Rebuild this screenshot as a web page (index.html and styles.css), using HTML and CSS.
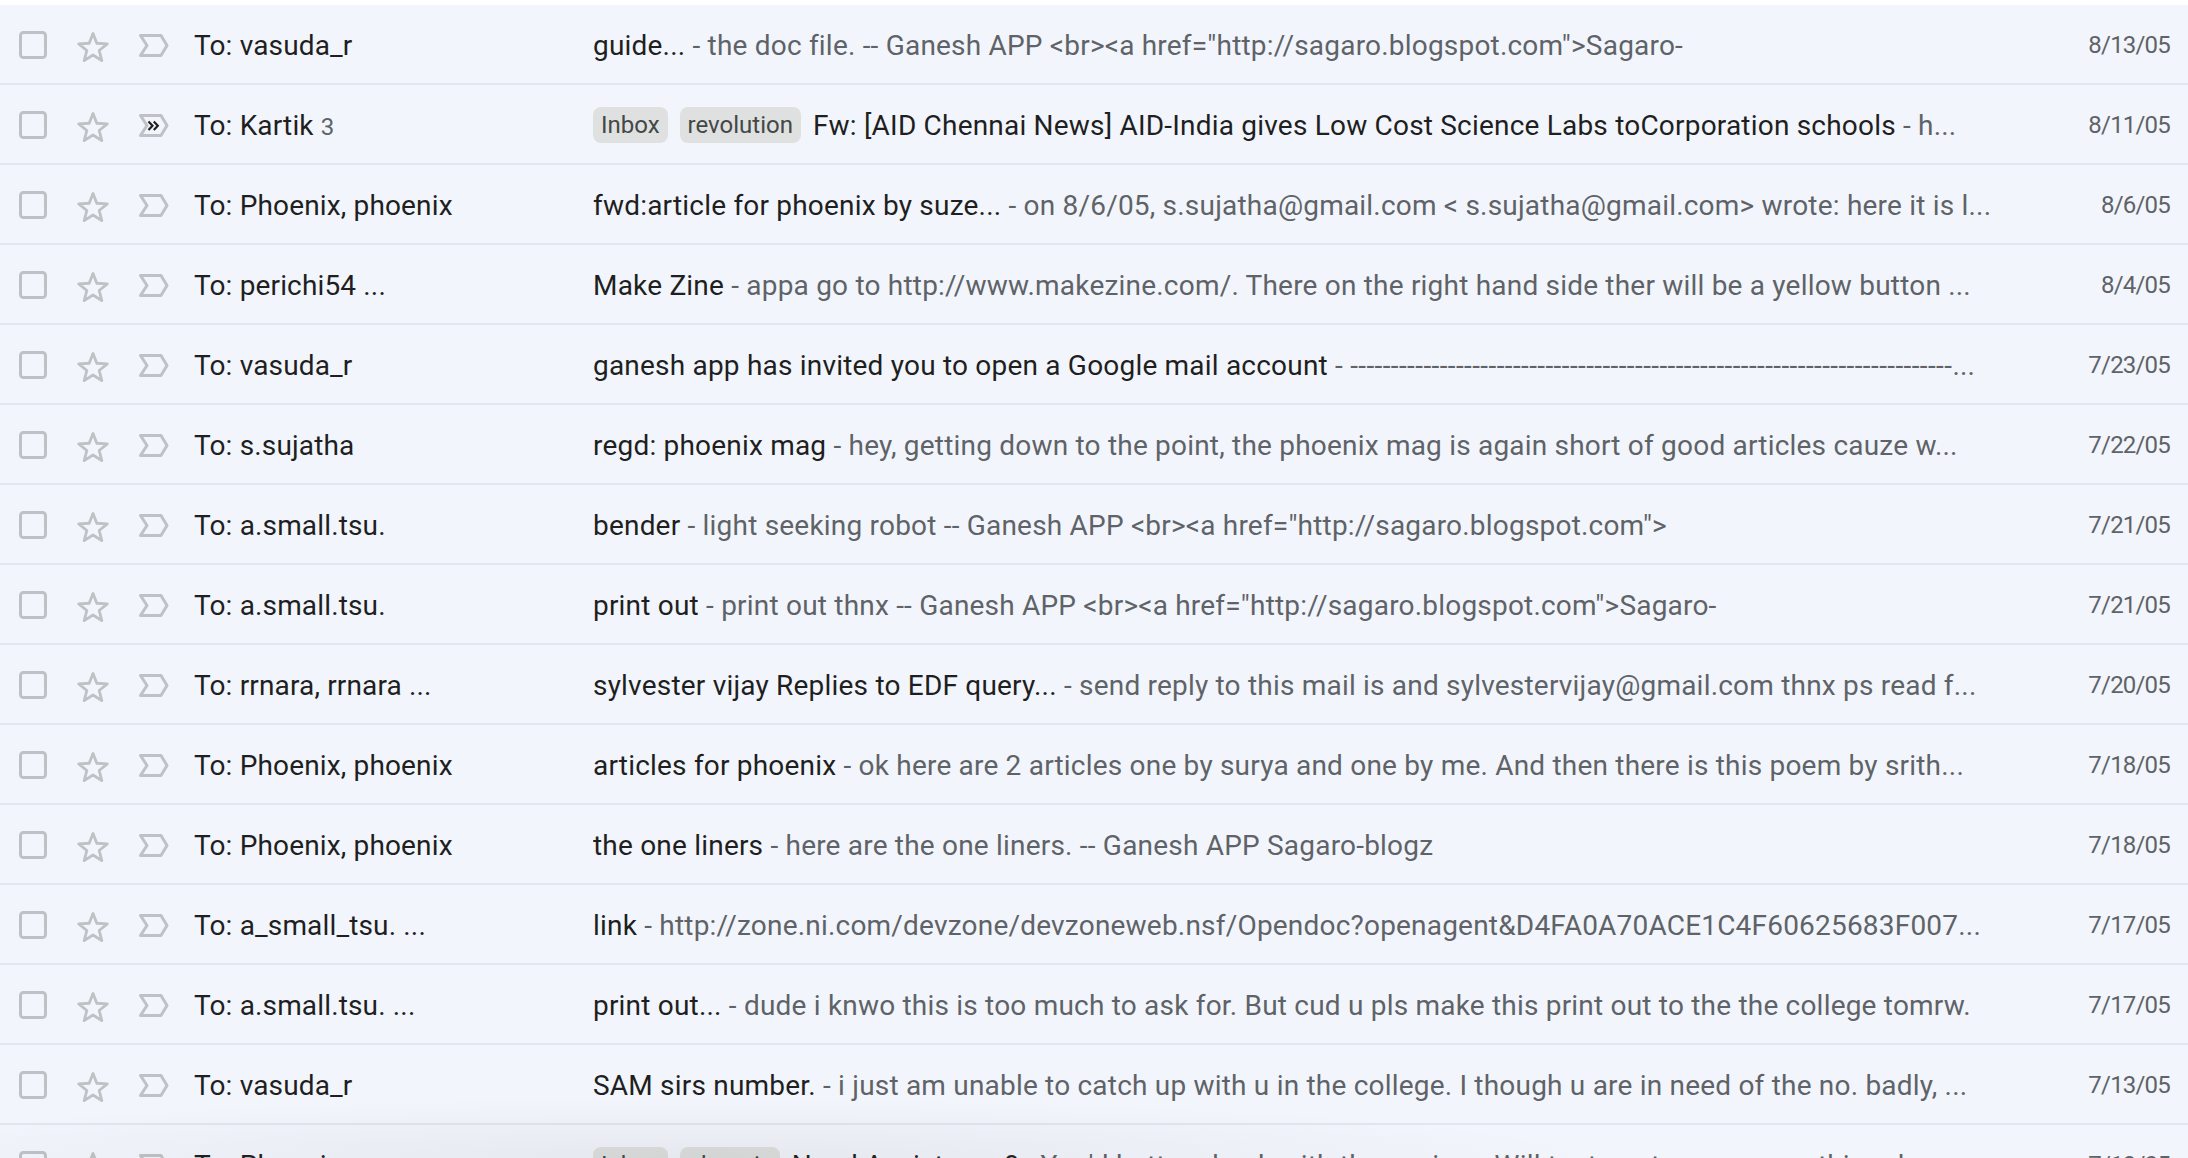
FILE: index.html
```html
<!DOCTYPE html>
<html>
<head>
<meta charset="utf-8">
<link rel="stylesheet" href="styles.css">
</head>
<body>
<svg class="defs" width="0" height="0">
  <symbol id="cb" viewBox="0 0 28 28"><rect x="1.5" y="1.5" width="25" height="25" rx="3" fill="none" stroke="#bfc2c5" stroke-width="3"/></symbol>
  <symbol id="star" viewBox="0 0 32 31"><polygon points="16,1.5 19.82,11.24 30.27,11.86 22.18,18.51 24.82,28.64 16,23 7.18,28.64 9.82,18.51 1.73,11.86 12.18,11.24" fill="none" stroke="#bfc2c5" stroke-width="2.8" stroke-linejoin="round"/></symbol>
  <symbol id="mk" viewBox="0 0 30 23"><path d="M1.5 1.5H22L28 11.5L22 21.5H1.5L8 11.5Z" fill="none" stroke="#bfc2c5" stroke-width="3" stroke-linejoin="round"/></symbol>
  <symbol id="mki" viewBox="0 0 30 23"><path d="M1.5 1.5H22L28 11.5L22 21.5H1.5L8 11.5Z" fill="none" stroke="#bfc2c5" stroke-width="3" stroke-linejoin="round"/><path d="M9.5 7.5L13.5 11.7L9.5 15.9M14.8 7.5L18.8 11.7L14.8 15.9" fill="none" stroke="#1f1f1f" stroke-width="2.2"/></symbol>
</svg>
<div class="list">
  <div class="row">
    <svg class="cb"><use href="#cb"/></svg><svg class="star"><use href="#star"/></svg><svg class="mk"><use href="#mk"/></svg>
    <div class="sender">To: vasuda_r</div>
    <div class="subj"><span class="s">guide...</span><span class="sn"> - the doc file. -- Ganesh APP &lt;br&gt;&lt;a href="http://sagaro.blogspot.com"&gt;Sagaro-</span></div>
    <div class="date">8/13/05</div>
  </div>
  <div class="row">
    <svg class="cb"><use href="#cb"/></svg><svg class="star"><use href="#star"/></svg><svg class="mk"><use href="#mki"/></svg>
    <div class="sender">To: Kartik <span class="cnt">3</span></div>
    <div class="subj"><span class="chip">Inbox</span><span class="chip">revolution</span><span class="s">Fw: [AID Chennai News] AID-India gives Low Cost Science Labs toCorporation schools</span><span class="sn"> - h...</span></div>
    <div class="date">8/11/05</div>
  </div>
  <div class="row">
    <svg class="cb"><use href="#cb"/></svg><svg class="star"><use href="#star"/></svg><svg class="mk"><use href="#mk"/></svg>
    <div class="sender">To: Phoenix, phoenix</div>
    <div class="subj"><span class="s">fwd:article for phoenix by suze...</span><span class="sn"> - on 8/6/05, s.sujatha@gmail.com &lt; s.sujatha@gmail.com&gt; wrote: here it is l...</span></div>
    <div class="date">8/6/05</div>
  </div>
  <div class="row">
    <svg class="cb"><use href="#cb"/></svg><svg class="star"><use href="#star"/></svg><svg class="mk"><use href="#mk"/></svg>
    <div class="sender">To: perichi54 ...</div>
    <div class="subj"><span class="s">Make Zine</span><span class="sn"> - appa go to http://www.makezine.com/. There on the right hand side ther will be a yellow button ...</span></div>
    <div class="date">8/4/05</div>
  </div>
  <div class="row">
    <svg class="cb"><use href="#cb"/></svg><svg class="star"><use href="#star"/></svg><svg class="mk"><use href="#mk"/></svg>
    <div class="sender">To: vasuda_r</div>
    <div class="subj"><span class="s">ganesh app has invited you to open a Google mail account</span><span class="sn"> - <span class="dash">--------------------------------------------------------------------------</span>...</span></div>
    <div class="date">7/23/05</div>
  </div>
  <div class="row">
    <svg class="cb"><use href="#cb"/></svg><svg class="star"><use href="#star"/></svg><svg class="mk"><use href="#mk"/></svg>
    <div class="sender">To: s.sujatha</div>
    <div class="subj"><span class="s">regd: phoenix mag</span><span class="sn"> - hey, getting down to the point, the phoenix mag is again short of good articles cauze w...</span></div>
    <div class="date">7/22/05</div>
  </div>
  <div class="row">
    <svg class="cb"><use href="#cb"/></svg><svg class="star"><use href="#star"/></svg><svg class="mk"><use href="#mk"/></svg>
    <div class="sender">To: a.small.tsu.</div>
    <div class="subj"><span class="s">bender</span><span class="sn"> - light seeking robot -- Ganesh APP &lt;br&gt;&lt;a href="http://sagaro.blogspot.com"&gt;</span></div>
    <div class="date">7/21/05</div>
  </div>
  <div class="row">
    <svg class="cb"><use href="#cb"/></svg><svg class="star"><use href="#star"/></svg><svg class="mk"><use href="#mk"/></svg>
    <div class="sender">To: a.small.tsu.</div>
    <div class="subj"><span class="s">print out</span><span class="sn"> - print out thnx -- Ganesh APP &lt;br&gt;&lt;a href="http://sagaro.blogspot.com"&gt;Sagaro-</span></div>
    <div class="date">7/21/05</div>
  </div>
  <div class="row">
    <svg class="cb"><use href="#cb"/></svg><svg class="star"><use href="#star"/></svg><svg class="mk"><use href="#mk"/></svg>
    <div class="sender">To: rrnara, rrnara ...</div>
    <div class="subj"><span class="s">sylvester vijay Replies to EDF query...</span><span class="sn"> - send reply to this mail is and sylvestervijay@gmail.com thnx ps read f...</span></div>
    <div class="date">7/20/05</div>
  </div>
  <div class="row">
    <svg class="cb"><use href="#cb"/></svg><svg class="star"><use href="#star"/></svg><svg class="mk"><use href="#mk"/></svg>
    <div class="sender">To: Phoenix, phoenix</div>
    <div class="subj"><span class="s">articles for phoenix</span><span class="sn"> - ok here are 2 articles one by surya and one by me. And then there is this poem by srith...</span></div>
    <div class="date">7/18/05</div>
  </div>
  <div class="row">
    <svg class="cb"><use href="#cb"/></svg><svg class="star"><use href="#star"/></svg><svg class="mk"><use href="#mk"/></svg>
    <div class="sender">To: Phoenix, phoenix</div>
    <div class="subj"><span class="s">the one liners</span><span class="sn"> - here are the one liners. -- Ganesh APP Sagaro-blogz</span></div>
    <div class="date">7/18/05</div>
  </div>
  <div class="row">
    <svg class="cb"><use href="#cb"/></svg><svg class="star"><use href="#star"/></svg><svg class="mk"><use href="#mk"/></svg>
    <div class="sender">To: a_small_tsu. ...</div>
    <div class="subj"><span class="s">link</span><span class="sn"> - http://zone.ni.com/devzone/devzoneweb.nsf/Opendoc?openagent&amp;D4FA0A70ACE1C4F60625683F007...</span></div>
    <div class="date">7/17/05</div>
  </div>
  <div class="row">
    <svg class="cb"><use href="#cb"/></svg><svg class="star"><use href="#star"/></svg><svg class="mk"><use href="#mk"/></svg>
    <div class="sender">To: a.small.tsu. ...</div>
    <div class="subj"><span class="s">print out...</span><span class="sn"> - dude i knwo this is too much to ask for. But cud u pls make this print out to the the college tomrw.</span></div>
    <div class="date">7/17/05</div>
  </div>
  <div class="row">
    <svg class="cb"><use href="#cb"/></svg><svg class="star"><use href="#star"/></svg><svg class="mk"><use href="#mk"/></svg>
    <div class="sender">To: vasuda_r</div>
    <div class="subj"><span class="s">SAM sirs number.</span><span class="sn"> - i just am unable to catch up with u in the college. I though u are in need of the no. badly, ...</span></div>
    <div class="date">7/13/05</div>
  </div>
  <div class="row">
    <svg class="cb"><use href="#cb"/></svg><svg class="star"><use href="#star"/></svg><svg class="mk"><use href="#mk"/></svg>
    <div class="sender">To: Phoenix <span class="cnt">2</span></div>
    <div class="subj"><span class="chip">Inbox</span><span class="chip">phoenix</span><span class="s">Need Assistance?</span><span class="sn"> - You'd better check with the seniors. Will try to get some more thing done...</span></div>
    <div class="date">7/13/05</div>
  </div>
</div>
<div class="shade"></div>
</body>
</html>
```

FILE: styles.css
```css
html, body {
  margin: 0;
  padding: 0;
  background: #ffffff;
  overflow: hidden;
}
body {
  position: relative;
  width: 2188px;
  height: 1158px;
  font-family: Roboto, "Noto Sans", Arial, sans-serif;
}
.defs {
  position: absolute;
  width: 0;
  height: 0;
  overflow: hidden;
}
.list {
  padding-top: 5px;
  background: #ffffff;
}
.row {
  display: flex;
  align-items: center;
  height: 80px;
  background: #f2f6fc;
  box-shadow: inset 0 -2px 0 #e1e6ee;
  padding-left: 19px;
  padding-right: 18px;
  box-sizing: border-box;
}
.cb {
  width: 28px;
  height: 28px;
  flex-shrink: 0;
  margin-right: 30px;
}
.star {
  width: 32px;
  height: 31px;
  flex-shrink: 0;
  margin-top: 5px;
  margin-right: 30px;
}
.mk {
  width: 30px;
  height: 23px;
  flex-shrink: 0;
  margin-right: 25px;
}
.sender {
  width: 336px;
  margin-right: 63px;
  flex-shrink: 0;
  font-size: 28px;
  letter-spacing: 0.15px;
  color: #1f1f1f;
  white-space: nowrap;
  overflow: hidden;
}
.cnt {
  font-size: 24px;
  letter-spacing: 0;
  color: #5f6368;
}
.subj {
  flex: 1;
  min-width: 0;
  font-size: 28px;
  letter-spacing: 0.2px;
  white-space: nowrap;
  overflow: hidden;
  text-overflow: ellipsis;
}
.s {
  color: #1f1f1f;
}
.sn {
  color: #5f6368;
}
.dash {
  letter-spacing: 0.4px;
}
.chip {
  display: inline-block;
  vertical-align: 2px;
  height: 36px;
  line-height: 36px;
  padding: 0 8px;
  margin-right: 12px;
  border-radius: 8px;
  background: #dfe1e0;
  color: #444746;
  font-size: 24px;
  letter-spacing: 0;
}
.date {
  width: 150px;
  flex-shrink: 0;
  text-align: right;
  font-size: 24px;
  letter-spacing: -0.8px;
  color: #5f6368;
}
.shade {
  position: absolute;
  left: 0;
  right: 0;
  bottom: 0;
  height: 60px;
  pointer-events: none;
  background: radial-gradient(ellipse 900px 60px at 700px 100%, rgba(60, 64, 67, 0.07), rgba(60, 64, 67, 0) 100%);
}
```
